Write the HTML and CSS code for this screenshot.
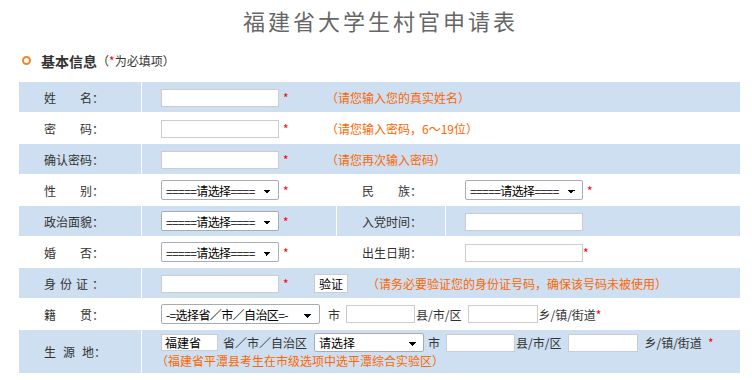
FILE: index.html
```html
<!DOCTYPE html>
<html lang="zh-CN">
<head>
    <meta charset="UTF-8">
    <title>福建省大学生村官申请表</title>
    <link rel="stylesheet" href="styles.css">
</head>
<body>

<h1 class="title">福建省大学生村官申请表</h1>

<div class="section">
    <span class="dot"></span><b>基本信息</b><span class="note">（<em>*</em>为必填项）</span>
</div>

<table class="form">
    <colgroup>
        <col class="c1"><col class="c2"><col class="c3"><col class="c4">
    </colgroup>
    <tr class="blue">
        <td class="label">姓　　名：</td>
        <td colspan="3"><input type="text" class="txt"><span class="req">*</span><span class="tip tip-a">（请您输入您的真实姓名）</span></td>
    </tr>
    <tr>
        <td class="label">密　　码：</td>
        <td colspan="3"><input type="password" class="txt"><span class="req">*</span><span class="tip tip-a">（请您输入密码，6～19位）</span></td>
    </tr>
    <tr class="blue">
        <td class="label">确认密码：</td>
        <td colspan="3"><input type="password" class="txt"><span class="req">*</span><span class="tip tip-a">（请您再次输入密码）</span></td>
    </tr>
    <tr>
        <td class="label">性　　别：</td>
        <td><select class="sel"><option>=====请选择====</option></select><span class="req">*</span></td>
        <td class="label">民　　族：</td>
        <td><select class="sel"><option>=====请选择====</option></select><span class="req">*</span></td>
    </tr>
    <tr class="blue">
        <td class="label">政治面貌：</td>
        <td><select class="sel"><option>=====请选择====</option></select><span class="req">*</span></td>
        <td class="label">入党时间：</td>
        <td><input type="text" class="txt"></td>
    </tr>
    <tr>
        <td class="label">婚　　否：</td>
        <td><select class="sel"><option>=====请选择====</option></select><span class="req">*</span></td>
        <td class="label">出生日期：</td>
        <td><input type="text" class="txt"><span class="req tight">*</span></td>
    </tr>
    <tr class="blue">
        <td class="label"><span class="sp4">身份证</span>：</td>
        <td colspan="3"><input type="text" class="txt"><span class="req">*</span><button type="button" class="btn">验证</button><span class="tip tip-b">（请务必要验证您的身份证号码，确保该号码未被使用）</span></td>
    </tr>
    <tr>
        <td class="label">籍　　贯：</td>
        <td colspan="3"><select class="sel sel-wide"><option>-=选择省／市／自治区=-</option></select><span class="unit city">市</span><input type="text" class="txt short"><span class="unit county">县/市/区</span><input type="text" class="txt short gap7"><span class="unit">乡/镇/街道</span><span class="req tight">*</span></td>
    </tr>
    <tr class="blue tall">
        <td class="label"><span class="sp7">生源</span>地：</td>
        <td colspan="3" class="origin">
            <div class="line"><input type="text" class="txt prov" value="福建省"><span class="unit after-prov">省／市／自治区</span><select class="sel sel-city"><option>请选择</option></select><span class="unit city2">市</span><input type="text" class="txt short"><span class="unit county">县/市/区</span><input type="text" class="txt short gap7"><span class="unit town">乡/镇/街道</span><span class="req wide">*</span></div>
            <div class="line tip tip-c">（福建省平潭县考生在市级选项中选平潭综合实验区）</div>
        </td>
    </tr>
</table>

</body>
</html>
```

FILE: styles.css
```css
body {
    margin: 0;
    font-family: "Noto Sans CJK SC", sans-serif;
    font-size: 12px;
    color: #333;
    background: #fff;
}

.title {
    margin: 0;
    height: 40px;
    line-height: 40px;
    padding-left: 9px;
    text-align: center;
    font-size: 22px;
    font-weight: normal;
    letter-spacing: 3px;
    color: #666;
}

.section {
    height: 41px;
    display: flex;
    align-items: center;
    padding-left: 22px;
}

.dot {
    width: 5px;
    height: 5px;
    border: 2px solid #f7841e;
    border-radius: 50%;
    margin-right: 10px;
}

.section b {
    font-size: 14px;
    color: #333;
}

.note em {
    font-style: normal;
    color: #f00;
}

/* form table */
.form {
    margin-left: 18px;
    width: 723px;
    border-spacing: 1px;
    table-layout: fixed;
}

.c1 { width: 122px; }
.c2 { width: 194px; }
.c3 { width: 108px; }
.c4 { width: 294px; }

.form td {
    height: 30px;
    padding: 0 0 0 19px;
    box-sizing: border-box;
    vertical-align: middle;
    white-space: nowrap;
}

.form td.label {
    padding-left: 25px;
}

.form tr.blue td {
    background: #cddff0;
}

.form tr.tall td {
    height: 43px;
}

.form td.origin {
    vertical-align: top;
    padding-top: 1px;
}

.sp4 { letter-spacing: 4px; }
.sp7 { letter-spacing: 7px; }

/* fields */
.txt {
    width: 118px;
    height: 18px;
    padding: 0 3px;
    border: 1px solid #ccc;
    box-sizing: border-box;
    font: 12px "Noto Sans CJK SC", sans-serif;
    color: #000;
    vertical-align: middle;
    outline: none;
}

.txt.short { width: 69px; }
.txt.gap7 { margin-left: 7px; width: 70px; }
.txt.prov { width: 57px; height: 17px; }

.sel {
    appearance: none;
    -webkit-appearance: none;
    width: 118px;
    height: 20px;
    padding: 0 0 0 4px;
    border: 1px solid #a5acb2;
    border-radius: 2px;
    box-sizing: border-box;
    font: 12px "Noto Sans CJK SC", sans-serif;
    letter-spacing: -0.6px;
    color: #000;
    vertical-align: middle;
    background-color: #fff;
    background-image: linear-gradient(45deg, transparent 50%, #000 50%), linear-gradient(135deg, #000 50%, transparent 50%);
    background-position: right 11px top 9px, right 7px top 9px;
    background-size: 4px 4px;
    background-repeat: no-repeat;
}

.sel-wide { width: 159px; }

.sel-city {
    width: 110px;
    height: 19px;
    margin-left: 7px;
    letter-spacing: 0;
    background-position: right 10px top 8px, right 6px top 8px;
}

.btn {
    width: 34px;
    height: 19px;
    margin-left: 21px;
    padding: 0;
    border: 1px solid #ccc;
    background: #fff;
    font: 12px "Noto Sans CJK SC", sans-serif;
    color: #000;
    vertical-align: middle;
}

.req {
    display: inline-block;
    width: 10px;
    margin-left: 4px;
    color: #f00;
    vertical-align: middle;
}

.req.tight { width: auto; margin-left: 0; }
.req.wide { width: auto; margin-left: 6px; }

.unit {
    vertical-align: middle;
    color: #333;
}

.unit.city { margin: 0 6px 0 8px; }
.unit.city2 { margin: 0 6px 0 4px; }
.unit.county { margin-left: 1px; }
.unit.after-prov { margin-left: 5px; }
.unit.town { margin-left: 6px; }

.tip {
    color: #ff6600;
    vertical-align: middle;
}

.tip-a { margin-left: 33px; }
.tip-b { margin-left: 19px; }

.line {
    height: 20px;
    line-height: 20px;
}

.line.tip-c {
    margin-left: -5px;
}
```
